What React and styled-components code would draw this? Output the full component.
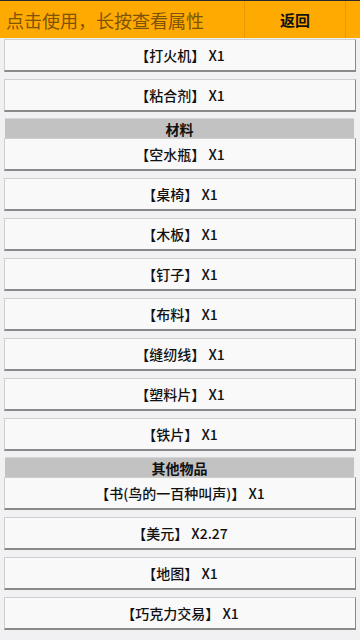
import React from 'react';
import styled, { createGlobalStyle } from 'styled-components';

const GlobalStyle = createGlobalStyle`
  html, body {
    margin: 0;
    padding: 0;
    background: #f1f1f3;
    font-family: "Noto Sans CJK SC", "Noto Sans", sans-serif;
  }
`;

const Page = styled.div`
  width: 360px;
  height: 640px;
  overflow: hidden;
  background: #f1f1f3;
`;

const TopBar = styled.header`
  display: flex;
  height: 37px;
  border-top: 1px solid #2a2a2a;
  background: #ffaa00;
`;

const Hint = styled.div`
  flex: 1;
  display: flex;
  align-items: center;
  padding-left: 6px;
  font-size: 18px;
  color: #7d5408;
  border-right: 1px solid #e69a00;
`;

const BackButton = styled.div`
  width: 100px;
  display: flex;
  align-items: center;
  justify-content: center;
  font-size: 15px;
  font-weight: bold;
  color: #111;
  border-right: 1px solid #e69a00;
`;

const BarTail = styled.div`
  width: 14px;
`;

const List = styled.div`
  display: flex;
  flex-direction: column;
  padding: 1px 4px 0 4px;
`;

const Item = styled.div`
  box-sizing: border-box;
  height: 33px;
  margin-bottom: 7px;
  display: flex;
  align-items: center;
  justify-content: center;
  background: #f9f9f9;
  border: 1px solid #cfcfcf;
  border-right-color: #8a8a8a;
  border-bottom: 2px solid #8a8a8a;
  font-size: 14px;
  font-weight: 500;
  color: #111;
`;

const Section = styled.div`
  box-sizing: border-box;
  height: 20px;
  margin: -1px 2px 0 1px;
  display: flex;
  align-items: center;
  justify-content: center;
  background: #c2c2c2;
  border-top: 1px solid #d6d6d6;
  font-size: 14px;
  font-weight: bold;
  color: #111;
`;

const groups = [
  { title: null, items: ['【打火机】 X1', '【粘合剂】 X1'] },
  {
    title: '材料',
    items: [
      '【空水瓶】 X1',
      '【桌椅】 X1',
      '【木板】 X1',
      '【钉子】 X1',
      '【布料】 X1',
      '【缝纫线】 X1',
      '【塑料片】 X1',
      '【铁片】 X1',
    ],
  },
  {
    title: '其他物品',
    items: ['【书(鸟的一百种叫声)】 X1', '【美元】 X2.27', '【地图】 X1', '【巧克力交易】 X1'],
  },
];

export default function App() {
  return (
    <Page>
      <GlobalStyle />
      <TopBar>
        <Hint>点击使用，长按查看属性</Hint>
        <BackButton>返回</BackButton>
        <BarTail />
      </TopBar>
      <List>
        {groups.map((g, i) => (
          <React.Fragment key={i}>
            {g.title && <Section>{g.title}</Section>}
            {g.items.map((it) => (
              <Item key={it}>{it}</Item>
            ))}
          </React.Fragment>
        ))}
      </List>
    </Page>
  );
}
